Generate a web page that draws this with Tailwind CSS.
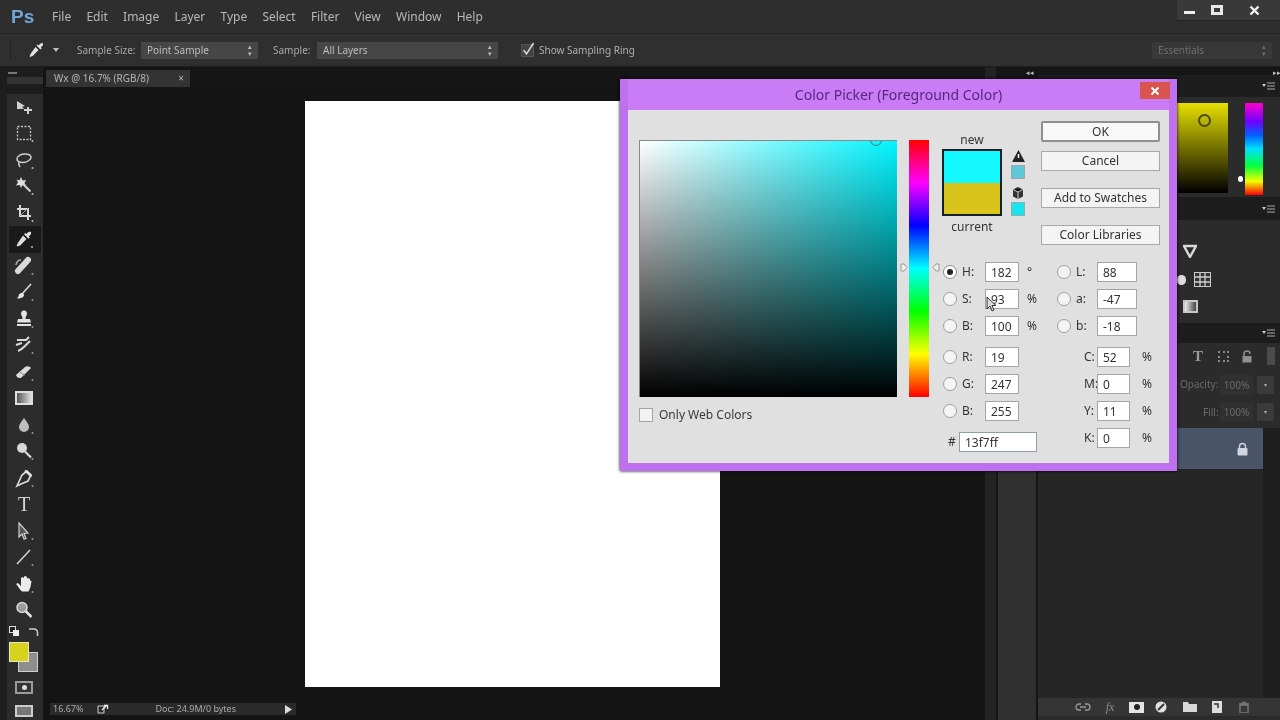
<!DOCTYPE html>
<html lang="en">

<head>
    <meta charset="utf-8">
    <title>Photoshop - Color Picker</title>
    <script src="https://cdn.jsdelivr.net/npm/@tailwindcss/browser@4"></script>
</head>

<body class="bg-[#1c1c1c]">
    <div class="relative w-[1280px] h-[720px] overflow-hidden flex flex-col bg-[#1c1c1c] font-['Noto_Sans',sans-serif] blur-[0.5px]">

        <!-- Menu bar -->
        <div class="h-[34px] shrink-0 flex items-center bg-[#2e2e2e] border-b border-[#242424] text-[#b8b8b8] text-[12px]">
            <div class="w-[52px] pl-[11px] text-[19px] leading-none font-bold text-[#6ea5d4] font-['Liberation_Sans',sans-serif]">Ps</div>
            <div class="flex gap-x-[15.200px]">
                <span>File</span>
                <span>Edit</span>
                <span>Image</span>
                <span>Layer</span>
                <span>Type</span>
                <span>Select</span>
                <span>Filter</span>
                <span>View</span>
                <span>Window</span>
                <span>Help</span>
            </div>
            <div class="ml-auto self-start flex h-[21px] w-[103px] bg-[#393939] border-b border-[#222] items-center text-white">
                <div class="w-[24px] flex justify-center pt-[5px]"><div class="w-[11px] h-[3px] bg-[#eee]"></div></div>
                <div class="w-[32px] flex justify-center"><div class="w-[12px] h-[10px] border-[3px] border-[#e8e8e8]"></div></div>
                <div class="flex-1 flex justify-center pr-[5px]">
                    <svg class="w-[11px] h-[11px]" viewBox="0 0 11 11"><path d="M1.500 1.500l8 8M9.500 1.500l-8 8" stroke="#f2f2f2" stroke-width="2.400" /></svg>
                </div>
            </div>
        </div>

        <!-- Options bar -->
        <div class="h-[33px] shrink-0 flex items-center bg-[#2f2f2f] border-b border-[#1d1d1d] text-[#a8a8a8] text-[10px]">
            <div class="w-px h-[18px] ml-[10px] bg-[#222]"></div>
            <svg class="w-[18px] h-[18px] ml-[16px]" viewBox="0 0 18 18"><path d="M15 1.500c1.400 1.200 1.400 2.600.3 3.600l-1.500 1.400.9 1-1.200 1.100-4-4 1.200-1.100.9.9 1.400-1.500c.6-.7 1.200-.8 2-.4zM8.500 6l3 3-5.500 5.700-2.700 1.300-.7-.7 1.200-2.800z" fill="#e2e2e2" /></svg>
            <svg class="w-[6px] h-[4px] ml-[8px]" viewBox="0 0 6 4"><path d="M0 0h6L3 4z" fill="#c0c0c0" /></svg>
            <span class="ml-[18px] w-[64px]">Sample Size:</span>
            <div class="w-[117px] h-[17px] flex items-center justify-between bg-[#464646] px-[6px] text-[#bdbdbd]">
                <span>Point Sample</span>
                <span class="text-[7px] leading-[7px] text-center">▴<br>▾</span>
            </div>
            <span class="ml-[15px] w-[44px]">Sample:</span>
            <div class="w-[181px] h-[17px] flex items-center justify-between bg-[#464646] px-[6px] text-[#bdbdbd]">
                <span>All Layers</span>
                <span class="text-[7px] leading-[7px] text-center">▴<br>▾</span>
            </div>
            <div class="w-[13px] h-[13px] ml-[23px] relative bg-[#434343] border border-[#555]">
                <svg class="absolute left-[-1px] top-[-3px] w-[15px] h-[15px]" viewBox="0 0 15 15"><path d="M2.500 8l3 4 7-11" fill="none" stroke="#d8d8d8" stroke-width="1.500" /></svg>
            </div>
            <span class="ml-[5px] text-[#b0b0b0]">Show Sampling Ring</span>
            <div class="ml-auto mr-[8px] w-[120px] h-[17px] flex items-center justify-between bg-[#383838] px-[6px] text-[#6e6e6e]">
                <span>Essentials</span>
                <span class="text-[7px] leading-[7px] text-center">▴<br>▾</span>
            </div>
        </div>

        <!-- Main row -->
        <div class="flex-1 min-h-0 flex">
            <div class="w-[7px] bg-[#1e1e1e]"></div>

            <!-- Tools -->
            <div class="w-[36px] shrink-0 flex flex-col pr-[2px] bg-[#2c2c2c]">
                <div class="h-[26.500px] shrink-0 -mr-[2px] bg-[#1d1d1d]">
                    <div class="h-[5px]"></div>
                    <div class="w-[9px] h-[2px] ml-[1px] bg-[#777]"></div>
                    <div class="h-[7px] mt-[3px] w-full bg-[#333]"></div>
                </div>
                <!-- move -->
                <div class="relative h-[26.500px] flex items-center justify-center"><svg class="w-[20px] h-[20px]" viewBox="0 0 20 20"><path d="M3 4l8 5-3 1 2 2H3zM13 10h2v2h3v2h-3v3h-2v-3h-3v-2h3z" fill="#cfcfcf" /></svg></div>
                <!-- marquee -->
                <div class="relative h-[26.500px] flex items-center justify-center"><svg class="w-[20px] h-[20px]" viewBox="0 0 20 20"><rect x="3.500" y="3.500" width="13" height="13" fill="none" stroke="#c4c4c4" stroke-width="1.300" stroke-dasharray="2 1.500" /><circle cx="18.500" cy="18" r="1" fill="#bbb" /></svg></div>
                <!-- lasso -->
                <div class="relative h-[26.500px] flex items-center justify-center"><svg class="w-[20px] h-[20px]" viewBox="0 0 20 20"><path d="M3 9c0-3 4-5 8-5s6 1.500 6 3.500-4 5-8 5c-3 0-6-1-6-3.500zM5 12c-1 2 0 3 1 5" fill="none" stroke="#cfcfcf" stroke-width="1.500" /><circle cx="18.500" cy="18" r="1" fill="#bbb" /></svg></div>
                <!-- wand -->
                <div class="relative h-[26.500px] flex items-center justify-center"><svg class="w-[20px] h-[20px]" viewBox="0 0 20 20"><path d="M7 1l1.500 3.500L12 4l-1.500 3L12 9.500 8.500 9 7 12 5.800 9 2 9.500 4 6.500 2.500 3.500 5.500 4.500z" fill="#e0e0e0" /><path d="M9.500 8.500l7 7" stroke="#d0d0d0" stroke-width="2.200" /><circle cx="18.500" cy="18" r="1" fill="#bbb" /></svg></div>
                <!-- crop -->
                <div class="relative h-[26.500px] flex items-center justify-center"><svg class="w-[20px] h-[20px]" viewBox="0 0 20 20"><path d="M6 2v11h11M3 6h11v11" fill="none" stroke="#d8d8d8" stroke-width="2" /><path d="M6 13L14 5" stroke="#999" /><circle cx="18.500" cy="18" r="1" fill="#bbb" /></svg></div>
                <!-- eyedropper (active) -->
                <div class="relative h-[26.500px] ml-[2px] flex items-center justify-center bg-[#1a1a1a]"><svg class="w-[20px] h-[20px] -ml-[2px]" viewBox="0 0 20 20"><path d="M16 2c1.500 1.300 1.500 2.800.3 4l-1.500 1.500 1 1.100-1.300 1.200-4.500-4.500 1.300-1.200 1 1 1.500-1.700c.7-.7 1.700-.9 2.700-.4zM9 6.500l3.500 3.500-6 6.200-3 1.400-.8-.8 1.300-3z" fill="#dfdfdf" /><circle cx="18" cy="18" r="1" fill="#bbb" /></svg></div>
                <!-- healing -->
                <div class="relative h-[26.500px] flex items-center justify-center"><svg class="w-[20px] h-[20px]" viewBox="0 0 20 20"><path d="M4 15L14 4" stroke="#dadada" stroke-width="6" stroke-linecap="round" /><path d="M2 9c.5-3 2.500-5 5-5" fill="none" stroke="#aaa" stroke-width="1.500" /><circle cx="18.500" cy="18" r="1" fill="#999" /></svg></div>
                <!-- brush -->
                <div class="relative h-[26.500px] flex items-center justify-center"><svg class="w-[20px] h-[20px]" viewBox="0 0 20 20"><path d="M17 2L8 12" stroke="#d4d4d4" stroke-width="1.600" /><path d="M8 11c2 0 2.500 2 1.500 3.500S5 17 2.500 16c2-.5 2-2 2.500-3.500.5-1 2-1.500 3-1.500z" fill="#e6e6e6" /><circle cx="18.500" cy="18" r="1" fill="#999" /></svg></div>
                <!-- stamp -->
                <div class="relative h-[26.500px] flex items-center justify-center"><svg class="w-[20px] h-[20px]" viewBox="0 0 20 20"><path d="M10 1.500c2 0 3 1.500 3 3 0 2-1.500 3-1.500 5.500H16l1 3.500H3L4 10h4.500C8.500 7.500 7 6.500 7 4.500c0-1.500 1-3 3-3zM3 15h14v2H3z" fill="#e4e4e4" /><circle cx="18.500" cy="18" r="1" fill="#999" /></svg></div>
                <!-- history brush -->
                <div class="relative h-[26.500px] flex items-center justify-center"><svg class="w-[20px] h-[20px]" viewBox="0 0 20 20"><path d="M3 5h9l3-3M2 10l6-2M4 16c3-1 5-3 7-5l5-5" fill="none" stroke="#d8d8d8" stroke-width="2" /><circle cx="18.500" cy="18" r="1" fill="#999" /></svg></div>
                <!-- eraser -->
                <div class="relative h-[26.500px] flex items-center justify-center"><svg class="w-[20px] h-[20px]" viewBox="0 0 20 20"><path d="M2 13l9-8c1.500-1 3-1 5 0l1 1-9.500 9.500c-1.500 1-3 .5-4.500-.5z" fill="#dcdcdc" /><path d="M5.500 9.500l5 4" stroke="#8a8a8a" /><circle cx="18.500" cy="18" r="1" fill="#999" /></svg></div>
                <!-- gradient -->
                <div class="relative h-[26.500px] flex items-center justify-center"><div class="w-[18px] h-[14px] border-[2px] border-[#ddd] bg-[linear-gradient(to_right,#555,#ddd)]"></div></div>
                <!-- blur -->
                <div class="relative h-[26.500px] flex items-center justify-center"><svg class="w-[20px] h-[20px]" viewBox="0 0 20 20"><path d="M10 3c2 3 5 6 5 9a5 5 0 0 1-10 0c0-3 3-6 5-9z" fill="#bdbdbd" /><circle cx="18.500" cy="18" r="1" fill="#999" /></svg></div>
                <!-- dodge -->
                <div class="relative h-[26.500px] flex items-center justify-center"><svg class="w-[20px] h-[20px]" viewBox="0 0 20 20"><circle cx="8" cy="7" r="5" fill="#d8d8d8" /><path d="M11 10.500l6 6" stroke="#d8d8d8" stroke-width="2.200" /><circle cx="18.500" cy="18" r="1" fill="#999" /></svg></div>
                <!-- pen -->
                <div class="relative h-[26.500px] flex items-center justify-center"><svg class="w-[20px] h-[20px]" viewBox="0 0 20 20"><path d="M13 3l4 4-3 6-7 3-4 2 2-4.500 3-6.500z" fill="none" stroke="#d8d8d8" stroke-width="1.700" /><path d="M11 2.500l6.500 6" stroke="#e4e4e4" stroke-width="2" /><circle cx="18.500" cy="18" r="1" fill="#999" /></svg></div>
                <!-- type -->
                <div class="relative h-[26.500px] flex items-center justify-center"><span class="text-[20px] leading-none text-[#d4d4d4] font-['Liberation_Serif',serif]">T</span></div>
                <!-- path selection -->
                <div class="relative h-[26.500px] flex items-center justify-center"><svg class="w-[20px] h-[20px]" viewBox="0 0 20 20"><path d="M5 2l9 10-4 .5 2 5-2 .5-2-5-3 3z" fill="#555" stroke="#d0d0d0" stroke-width="1.200" /><circle cx="18.500" cy="18" r="1" fill="#999" /></svg></div>
                <!-- line -->
                <div class="relative h-[26.500px] flex items-center justify-center"><svg class="w-[20px] h-[20px]" viewBox="0 0 20 20"><path d="M3 17L16 3" stroke="#cfcfcf" stroke-width="1.600" /><circle cx="18.500" cy="18" r="1" fill="#999" /></svg></div>
                <!-- hand -->
                <div class="relative h-[26.500px] flex items-center justify-center"><svg class="w-[20px] h-[20px]" viewBox="0 0 20 20"><path d="M2 10l2-1 3 3V4l1.500-1L10 4V2.500l1.500-.5L13 3v1.500l1.500-.5L16 5v1.500l1.500.5-1 6-2 4.500H8C6 16 4 12 2 10z" fill="#ececec" /><circle cx="18.500" cy="18" r="1" fill="#999" /></svg></div>
                <!-- zoom -->
                <div class="relative h-[26.500px] flex items-center justify-center"><svg class="w-[20px] h-[20px]" viewBox="0 0 20 20"><circle cx="8" cy="7.500" r="5" fill="#9a9a9a" stroke="#d8d8d8" stroke-width="1.500" /><path d="M11.500 11l6 6" stroke="#e0e0e0" stroke-width="2.500" /></svg></div>

                <!-- Default colours / swap -->
                <div class="mt-[2px] flex justify-between px-[2px] h-[12px]">
                    <svg class="w-[11px] h-[11px]" viewBox="0 0 11 11"><rect x="0.500" y="0.500" width="6" height="6" fill="#222" stroke="#ddd" /><rect x="4" y="4" width="6" height="6" fill="#eee" /></svg>
                    <svg class="w-[11px] h-[11px]" viewBox="0 0 11 11"><path d="M1 3h5c2 0 3.500 1.500 3.500 4v3" fill="none" stroke="#ccc" stroke-width="1.500" /></svg>
                </div>
                <!-- Foreground / background -->
                <div class="relative h-[30px] mt-[4px] ml-[2px]">
                    <div class="absolute left-[9px] top-[10px] w-[20px] h-[20px] bg-[#8e8e8e] border border-[#cfcfcf]"></div>
                    <div class="absolute left-0 top-0 w-[20px] h-[20px] bg-[#d6d21e] border border-[#e8e8c8]"></div>
                </div>
                <div class="mt-[9px] self-center w-[18px] h-[13px] flex items-center justify-center border-[2px] border-[#9c9c9c] bg-[#333]"><div class="w-[5px] h-[5px] rounded-full bg-[#ddd]"></div></div>
                <div class="mt-[11px] self-center w-[18px] h-[12px] border-[2px] border-[#ccc] bg-[#777]"></div>
            </div>

            <!-- Workspace -->
            <div class="w-[942px] shrink-0 flex flex-col bg-[#141414]">
                <div class="h-[23px] shrink-0 pt-[3px] bg-[#151515]">
                    <div class="w-[144px] h-[17px] ml-[3px] flex items-center justify-between pl-[8px] pr-[6px] bg-[#333] text-[#b4b4b4] text-[10px]">
                        <span>Wx @ 16.7% (RGB/8)</span>
                        <span>×</span>
                    </div>
                </div>
                <div class="flex-1 pl-[262px] pt-[11px]">
                    <div class="w-[415px] h-[586px] bg-white"></div>
                </div>
                <!-- Status bar -->
                <div class="h-[12px] mb-[5px] w-[246px] shrink-0 flex items-center ml-[7px] bg-[#2a2a2a] text-[#aaaaaa] text-[9px]">
                    <span class="ml-[3px]">16.67%</span>
                    <svg class="ml-[14px] w-[12px] h-[10px]" viewBox="0 0 12 10"><path d="M1 2h6v7H1z" fill="none" stroke="#ccc" /><path d="M5 6l4-4M7 1.500h3.500V5" fill="none" stroke="#eee" stroke-width="1.300" /></svg>
                    <span class="ml-[46px]">Doc: 24.9M/0 bytes</span>
                    <svg class="ml-auto mr-[4px] w-[7px] h-[9px]" viewBox="0 0 7 9"><path d="M0 0l7 4.500L0 9z" fill="#ddd" /></svg>
                </div>
            </div>

            <!-- Dock -->
            <div class="w-[13px] bg-[#232323] border-r-2 border-[#151515]"></div>
            <div class="w-[40px] flex flex-col bg-[#303030] border-r-2 border-[#151515]">
                <div class="h-[12px] bg-[#151515] flex justify-end pr-[6px] text-[6px] leading-[12px] text-[#bbb]"></div>
            </div>

            <div class="w-[242px] flex flex-col bg-[#2b2b2b]">
                <!-- Colour panel -->
                <div class="h-[8px] bg-[#151515]"></div>
                <div class="h-[22px] flex items-center justify-end pr-[5px] bg-[#1d1d1d]">
                    <svg class="w-[13px] h-[8px]" viewBox="0 0 13 8"><path d="M0 2h4L2 5z" fill="#ccc" /><path d="M5 1h8M5 4h8M5 7h8" stroke="#aaa" /></svg>
                </div>
                <div class="h-[100px] flex pt-[6px] pl-[2px]">
                    <div class="relative w-[188px] h-[90px] bg-[linear-gradient(to_bottom,#e6e000,#000)]">
                        <div class="absolute left-[158px] top-[11px] w-[13px] h-[13px] rounded-full border-2 border-[#4b4a10]"></div>
                    </div>
                    <div class="relative w-[18px] h-[92px] ml-[17px] bg-[linear-gradient(to_bottom,#ff00c8,#7000ff_20%,#0060ff_35%,#00e0ff_50%,#00ff40_68%,#f0ff00_85%,#ff0000)]">
                        <div class="absolute left-[-7px] top-[73px] w-[5px] h-[6px] rounded-full bg-white"></div>
                    </div>
                </div>
                <!-- Swatches / adjustments panel -->
                <div class="h-[23px] flex items-center justify-end pr-[5px] bg-[#1d1d1d]">
                    <svg class="w-[13px] h-[8px]" viewBox="0 0 13 8"><path d="M0 2h4L2 5z" fill="#ccc" /><path d="M5 1h8M5 4h8M5 7h8" stroke="#aaa" /></svg>
                </div>
                <div class="h-[103px] flex flex-col pl-[145px] pt-[24px]">
                    <svg class="w-[14px] h-[14px]" viewBox="0 0 14 14"><path d="M1 2h12L7 13z" fill="none" stroke="#d8d8d8" stroke-width="2.400" /></svg>
                    <div class="flex items-center gap-[8px] -ml-[6px] mt-[14px] h-[15px]">
                        <div class="w-[9px] h-[10px] rounded-full bg-[#ddd]"></div>
                        <svg class="w-[17px] h-[15px]" viewBox="0 0 17 15"><rect x="0.500" y="0.500" width="16" height="14" fill="#333" stroke="#ccc" /><path d="M1 5h15M1 10h15M6 1v13M11 1v13" stroke="#cfcfcf" stroke-width="1.300" /></svg>
                    </div>
                    <div class="w-[15px] h-[13px] mt-[13px] border-2 border-[#c8c8c8] bg-[linear-gradient(to_right,#eee,#444)]"></div>
                </div>
                <!-- Layers panel -->
                <div class="h-[20px] flex items-center justify-end pr-[5px] bg-[#1d1d1d]">
                    <svg class="w-[13px] h-[8px]" viewBox="0 0 13 8"><path d="M0 2h4L2 5z" fill="#ccc" /><path d="M5 1h8M5 4h8M5 7h8" stroke="#aaa" /></svg>
                </div>
                <div class="h-[26px] flex items-center pl-[155px]">
                    <span class="w-[9px] text-[15px] leading-none font-bold text-[#9a9a9a] font-['Liberation_Serif',serif]">T</span>
                    <div class="ml-[16px] w-[11px] h-[11px] border-2 border-dotted border-[#8a8a8a]"></div>
                    <svg class="ml-[12px] w-[12px] h-[13px]" viewBox="0 0 12 13"><path d="M3 6V4a3 3 0 0 1 6 0" fill="none" stroke="#909090" stroke-width="1.500" /><rect x="1.500" y="6" width="9" height="6.500" fill="#909090" /></svg>
                    <div class="ml-[14px] w-[8px] h-[18px] bg-[#4a4a4a]"></div>
                </div>
                <div class="h-[31px] flex items-center pl-[142px] text-[10px] text-[#6a6a6a]">
                    <span class="w-[40px]">Opacity:</span>
                    <span class="w-[33px] h-[20px] leading-[20px] text-center bg-[#303030]">100%</span>
                    <div class="w-[17px] h-[18px] ml-[4px] bg-[#3a3a3a] text-[6px] leading-[18px] text-center text-[#aaa]">▾</div>
                </div>
                <div class="h-[28px] pb-[4px] flex items-center pl-[165px] text-[10px] text-[#6a6a6a]">
                    <span class="w-[17px]">Fill:</span>
                    <span class="w-[33px] h-[20px] leading-[20px] text-center bg-[#303030]">100%</span>
                    <div class="w-[17px] h-[18px] ml-[4px] bg-[#3a3a3a] text-[6px] leading-[18px] text-center text-[#aaa]">▾</div>
                </div>
                <div class="flex-1 min-h-0 flex bg-[#1e1e1e]">
                    <div class="w-[225px] flex flex-col bg-[#262626]">
                        <div class="h-[41px] flex items-center justify-end pr-[14px] bg-[#4a5468]">
                            <svg class="w-[13px] h-[14px]" viewBox="0 0 13 14"><path d="M3.500 6V4.500a3 3 0 0 1 6 0V6" fill="none" stroke="#d0d4dc" stroke-width="1.400" /><rect x="1.500" y="6" width="10" height="7.500" rx="1" fill="#d0d4dc" /></svg>
                        </div>
                    </div>
                </div>
                <!-- Layers footer -->
                <div class="h-[18px] mb-[4px] flex items-center pl-[37px] gap-x-[11px] bg-[#353535]">
                    <svg class="w-[16px] h-[10px]" viewBox="0 0 16 10"><path d="M6 2H4a3 3 0 0 0 0 6h2M10 2h2a3 3 0 0 1 0 6h-2M5 5h6" fill="none" stroke="#9a9a9a" stroke-width="1.300" /></svg>
                    <span class="w-[16px] text-[12px] leading-none italic text-[#8a8a8a] font-['Liberation_Serif',serif] text-center">fx</span>
                    <div class="w-[15px] h-[11px] flex items-center justify-center bg-[#e4e4e4]"><div class="w-[6px] h-[6px] rounded-full bg-[#222]"></div></div>
                    <svg class="w-[16px] h-[12px]" viewBox="0 0 16 12"><circle cx="6" cy="6" r="5.500" fill="#e0e0e0" /><path d="M3 9l6-6" stroke="#333" stroke-width="2" /></svg>
                    <svg class="w-[16px] h-[12px]" viewBox="0 0 16 12"><path d="M1 1h5l1 2h8v8H1z" fill="#d8d8d8" /></svg>
                    <svg class="w-[16px] h-[12px]" viewBox="0 0 16 12"><path d="M3 0h10v12H3z" fill="#dedede" /><path d="M5 3h4v4" fill="none" stroke="#333" stroke-width="1.500" /></svg>
                    <svg class="w-[16px] h-[12px]" viewBox="0 0 16 12"><path d="M3 3h10M5 3l3-2 3 2M4 4h8v8H4z" fill="none" stroke="#777" stroke-width="1.400" /></svg>
                </div>
            </div>
        </div>

        <!-- Color Picker dialog -->
        <div class="absolute left-[620px] top-[79px] w-[557px] h-[392px] flex flex-col bg-[#c97cf6] border-x-[8px] border-b-[8px] border-[#bf70ee] shadow-[0_0_3px_#000]">
            <!-- Title -->
            <div class="relative h-[31px] shrink-0 flex items-center justify-center -mx-[8px] text-[14px] text-[#55287f]">
                <span>Color Picker (Foreground Color)</span>
                <div class="absolute left-[520px] top-[3px] w-[30px] h-[17px] flex items-center justify-center bg-[#d9534f]">
                    <svg class="w-[10px] h-[10px]" viewBox="0 0 10 10"><path d="M1.500 1.500l7 7M8.500 1.500l-7 7" stroke="#fff" stroke-width="2" /></svg>
                </div>
            </div>
            <!-- Body -->
            <div class="relative flex-1 min-h-0 flex bg-[#e0e0e0] text-[12px] text-[#333]">
                <!-- Colour field and hue slider -->
                <div class="pl-[11px] pt-[30px] w-[314px] flex flex-col">
                    <div class="flex">
                        <div class="relative w-[258px] h-[257px] overflow-hidden border-t border-l border-[#888] bg-[linear-gradient(to_top,#000,transparent),linear-gradient(to_right,#fff,#00f4ff)]">
                            <div class="absolute left-[230px] top-[-7px] w-[12px] h-[12px] rounded-full border border-[#2a7f86]"></div>
                        </div>
                        <div class="relative ml-[12px] w-[20px] h-[257px] bg-[linear-gradient(to_bottom,#f00,#f0f_16.67%,#00f_33.33%,#0ff_50%,#0f0_66.67%,#ff0_83.33%,#f00)]">
                            <svg class="absolute left-[-9px] top-[123px] w-[8px] h-[9px]" viewBox="0 0 8 9"><path d="M1 1h3l3 3.500L4 8H1z" fill="#eee" stroke="#999" /></svg>
                            <svg class="absolute left-[23px] top-[123px] w-[8px] h-[9px]" viewBox="0 0 8 9"><path d="M7 1H4L1 4.500 4 8h3z" fill="#eee" stroke="#999" /></svg>
                        </div>
                    </div>
                    <label class="mt-[9px] flex items-center gap-x-[6px]">
                        <span class="w-[14px] h-[14px] border border-[#a5a5a5] bg-[#f2f2f2]"></span>
                        <span class="text-[#3a3a3a]">Only Web Colors</span>
                    </label>
                </div>

                <!-- Values column -->
                <div class="flex flex-col pt-[11px]">
                    <div class="h-[141px] flex">
                        <div class="w-[60px] mt-[10px] flex flex-col items-center">
                            <span class="h-[18px] pt-[1px] leading-[16px]">new</span>
                            <div class="w-[60px] h-[67px] flex flex-col border-2 border-[#14202a]">
                                <div class="flex-1 bg-[#13f7ff]"></div>
                                <div class="flex-1 bg-[#d8c41a]"></div>
                            </div>
                            <span class="mt-[2px]">current</span>
                        </div>
                        <div class="w-[16px] ml-[8px] mt-[29px] flex flex-col items-center">
                            <svg class="w-[13px] h-[12px]" viewBox="0 0 13 12"><path d="M6.500 0L13 12H0z" fill="#222" /><path d="M6.500 4v4" stroke="#fff" stroke-width="1.500" /></svg>
                            <div class="w-[14px] h-[14px] mt-[3px] border border-[#9aa] bg-[#5fc8d8]"></div>
                            <svg class="w-[12px] h-[12px] mt-[8px]" viewBox="0 0 12 12"><path d="M6 0l5 2.500v7L6 12 1 9.500v-7z" fill="#333" /><path d="M1 2.500L6 5l5-2.500M6 5v7" stroke="#ccc" /></svg>
                            <div class="w-[14px] h-[14px] mt-[3px] border border-[#9aa] bg-[#1ae4ee]"></div>
                        </div>
                        <div class="ml-[15px] w-[119px] flex flex-col text-center text-[#333]">
                            <div class="h-[21px] leading-[17px] bg-[#f8f8f8] border-2 border-[#8f8f8f] rounded-[2px]">OK</div>
                            <div class="h-[20px] mt-[9px] leading-[18px] bg-[#f4f4f4] border border-[#a8a8a8]">Cancel</div>
                            <div class="h-[20px] mt-[17px] leading-[18px] bg-[#f4f4f4] border border-[#a8a8a8]">Add to Swatches</div>
                            <div class="h-[20px] mt-[17px] leading-[18px] bg-[#f4f4f4] border border-[#a8a8a8]">Color Libraries</div>
                        </div>
                    </div>

                    <!-- HSB + Lab -->
                    <div class="grid grid-cols-[20px_23px_34px_38px_19px_21px_40px] gap-y-[7px] items-center">
                        <span class="w-[14px] h-[14px] ml-[1px] flex items-center justify-center rounded-full border border-[#8a8a8a] bg-white"><span class="w-[6px] h-[6px] rounded-full bg-[#222]"></span></span>
                        <span>H:</span>
                        <input readonly value="182" class="w-[34px] h-[20px] px-[5px] bg-white border border-[#a5a5a5] outline-none">
                        <span class="pl-[8px]">°</span>
                        <span class="w-[14px] h-[14px] rounded-full border border-[#a0a0a0] bg-[#f4f4f4]"></span>
                        <span>L:</span>
                        <input readonly value="88" class="w-[40px] h-[20px] px-[5px] bg-white border border-[#a5a5a5] outline-none">

                        <span class="w-[14px] h-[14px] ml-[1px] rounded-full border border-[#a0a0a0] bg-[#f4f4f4]"></span>
                        <span>S:</span>
                        <input readonly value="93" class="w-[34px] h-[20px] px-[5px] bg-white border border-[#a5a5a5] outline-none">
                        <span class="pl-[8px]">%</span>
                        <span class="w-[14px] h-[14px] rounded-full border border-[#a0a0a0] bg-[#f4f4f4]"></span>
                        <span>a:</span>
                        <input readonly value="-47" class="w-[40px] h-[20px] px-[5px] bg-white border border-[#a5a5a5] outline-none">

                        <span class="w-[14px] h-[14px] ml-[1px] rounded-full border border-[#a0a0a0] bg-[#f4f4f4]"></span>
                        <span>B:</span>
                        <input readonly value="100" class="w-[34px] h-[20px] px-[5px] bg-white border border-[#a5a5a5] outline-none">
                        <span class="pl-[8px]">%</span>
                        <span class="w-[14px] h-[14px] rounded-full border border-[#a0a0a0] bg-[#f4f4f4]"></span>
                        <span>b:</span>
                        <input readonly value="-18" class="w-[40px] h-[20px] px-[5px] bg-white border border-[#a5a5a5] outline-none">
                    </div>

                    <!-- RGB + CMYK -->
                    <div class="mt-[11px] grid grid-cols-[20px_23px_34px_66px_12px_33px_26px] gap-y-[7px] items-center">
                        <span class="w-[14px] h-[14px] ml-[1px] rounded-full border border-[#a0a0a0] bg-[#f4f4f4]"></span>
                        <span>R:</span>
                        <input readonly value="19" class="w-[34px] h-[20px] px-[5px] bg-white border border-[#a5a5a5] outline-none">
                        <span></span>
                        <span class="-ml-[1px]">C:</span>
                        <input readonly value="52" class="w-[33px] h-[20px] px-[5px] bg-white border border-[#a5a5a5] outline-none">
                        <span class="pl-[12px]">%</span>

                        <span class="w-[14px] h-[14px] ml-[1px] rounded-full border border-[#a0a0a0] bg-[#f4f4f4]"></span>
                        <span>G:</span>
                        <input readonly value="247" class="w-[34px] h-[20px] px-[5px] bg-white border border-[#a5a5a5] outline-none">
                        <span></span>
                        <span class="-ml-[1px]">M:</span>
                        <input readonly value="0" class="w-[33px] h-[20px] px-[5px] bg-white border border-[#a5a5a5] outline-none">
                        <span class="pl-[12px]">%</span>

                        <span class="w-[14px] h-[14px] ml-[1px] rounded-full border border-[#a0a0a0] bg-[#f4f4f4]"></span>
                        <span>B:</span>
                        <input readonly value="255" class="w-[34px] h-[20px] px-[5px] bg-white border border-[#a5a5a5] outline-none">
                        <span></span>
                        <span class="-ml-[1px]">Y:</span>
                        <input readonly value="11" class="w-[33px] h-[20px] px-[5px] bg-white border border-[#a5a5a5] outline-none">
                        <span class="pl-[12px]">%</span>

                        <div class="col-span-4 flex items-center pl-[6px] pt-[4px]">
                            <span class="w-[11px]">#</span>
                            <input readonly value="13f7ff" class="w-[78px] h-[20px] px-[5px] bg-white border border-[#8fa0a8] outline-none">
                        </div>
                        <span class="-ml-[1px] self-start leading-[20px]">K:</span>
                        <input readonly value="0" class="self-start w-[33px] h-[20px] px-[5px] bg-white border border-[#a5a5a5] outline-none">
                        <span class="pl-[12px] self-start leading-[20px]">%</span>
                    </div>
                </div>

                <!-- Mouse cursor -->
                <svg class="absolute left-[358px] top-[186px] w-[13px] h-[17px]" viewBox="0 0 13 17"><path d="M1 1v12l3-3 2 5 2-1-2-4.500h4z" fill="#d8d8d8" stroke="#333" /></svg>
            </div>
        </div>

        <!-- Panel collapse grips -->
        <div class="absolute left-[1026px] top-[69px] text-[7px] leading-[7px] text-[#c0c0c0]">◂◂</div>
        <div class="absolute left-[1273px] top-[69px] text-[7px] leading-[7px] text-[#c0c0c0]">▸▸</div>
    </div>
</body>

</html>
